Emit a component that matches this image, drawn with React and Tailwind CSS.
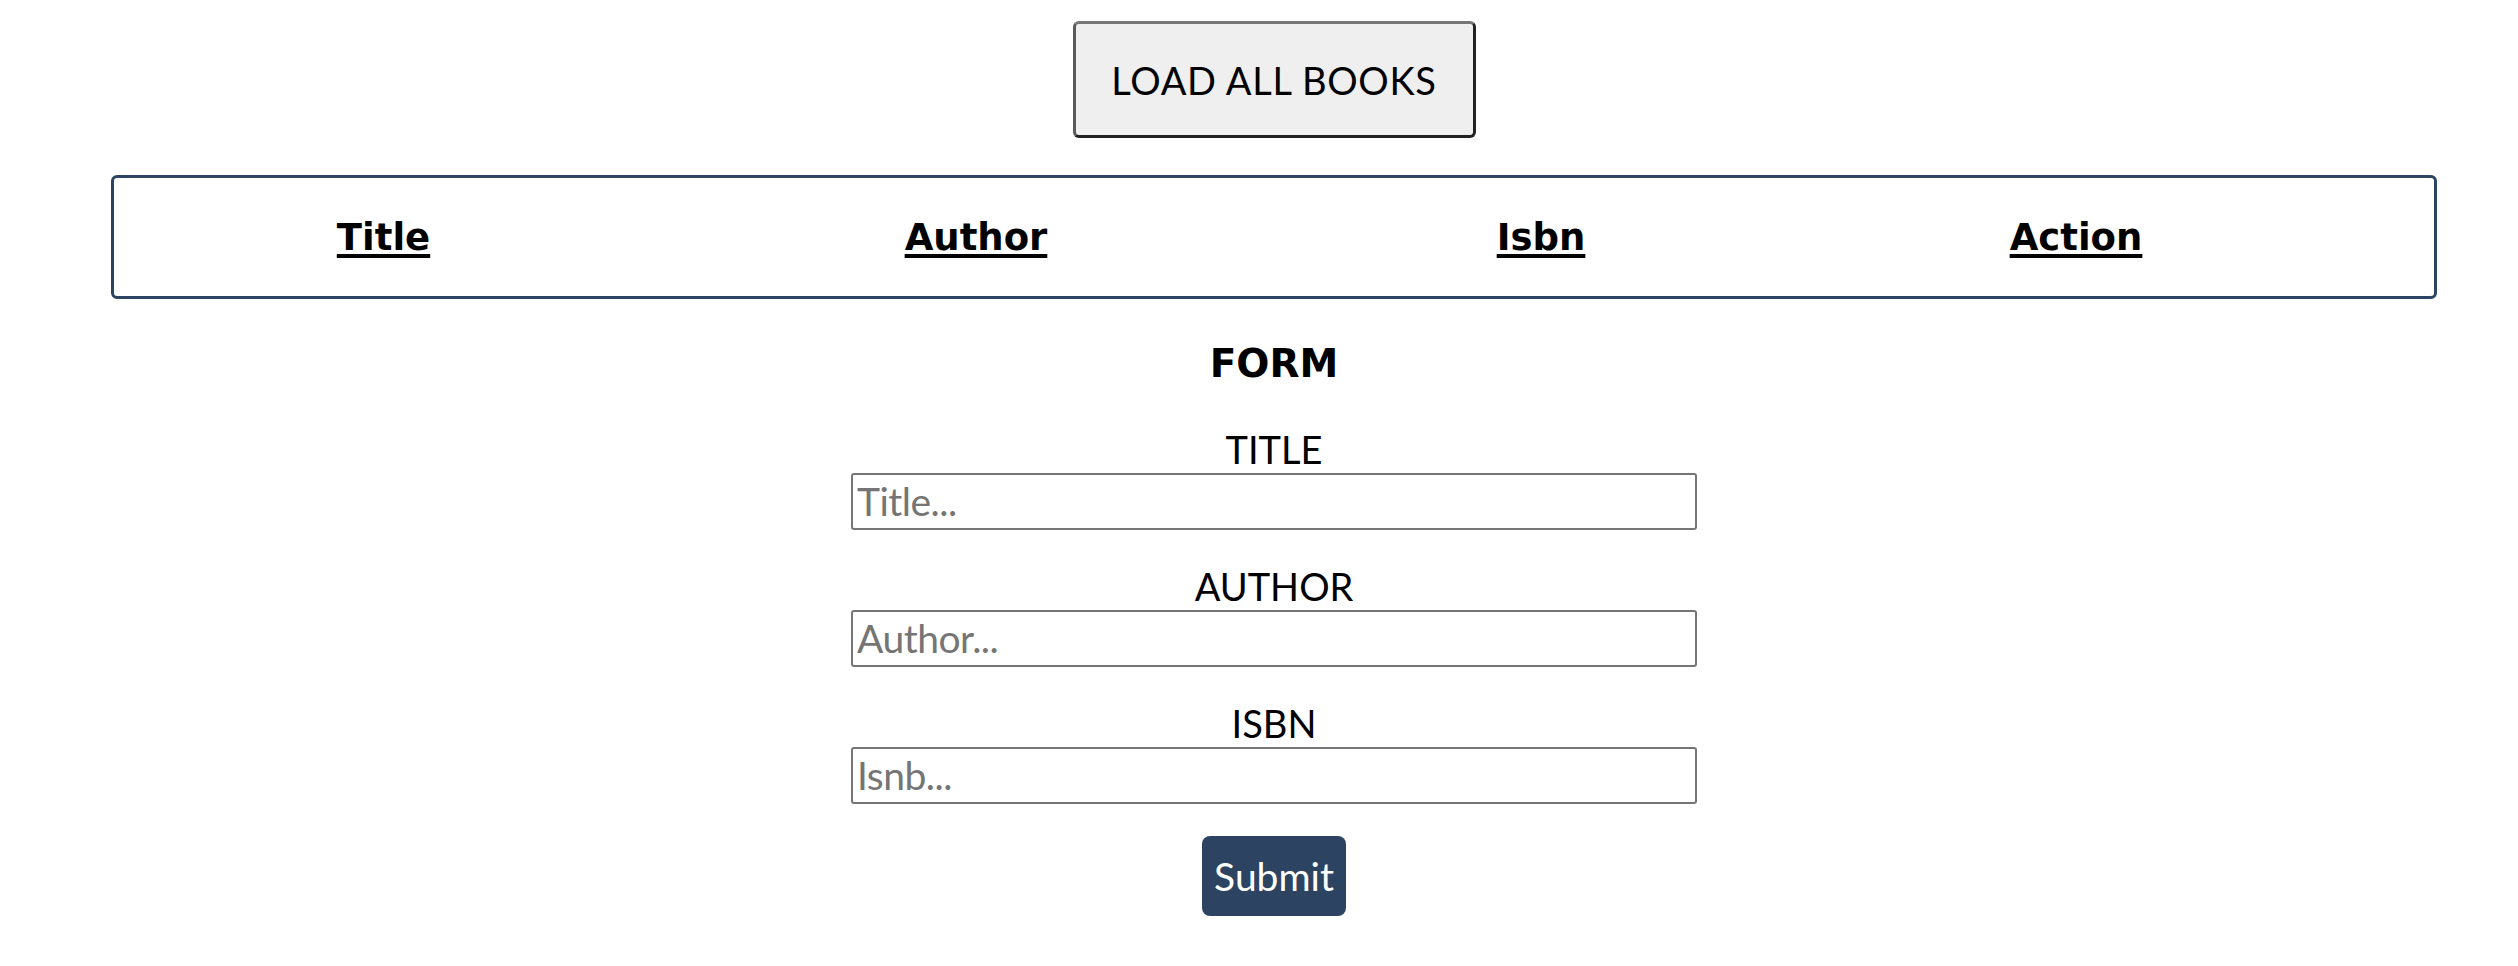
import React from "react";

export default function App() {
  const headers = ["Title", "Author", "Isbn", "Action"];
  const fields = [
    { label: "TITLE", ph: "Title..." },
    { label: "AUTHOR", ph: "Author..." },
    { label: "ISBN", ph: "Isnb..." },
  ];
  return (
    <div className="min-h-screen bg-white pl-[30px] pt-[21px] font-['Lato',sans-serif] text-black">
      <div className="flex justify-center">
        <button
          type="button"
          className="flex h-[117px] w-[403px] items-center justify-center rounded-[6px] border-[3px] border-t-[#767676] border-l-[#5a5a5a] border-b-[#222222] border-r-[#222222] bg-[#efefef] text-[38px] leading-none tracking-[0.7px] text-black"
        >
          LOAD ALL BOOKS
        </button>
      </div>

      <div className="mx-[81px] mt-[37px] grid h-[124px] grid-cols-[539px_646px_484px_586px] items-center rounded-[6px] border-[3px] border-[#2c4562]">
        {headers.map((h) => (
          <div key={h} className="text-center">
            <span className="font-['DejaVu_Sans',sans-serif] text-[37px] font-bold leading-none underline decoration-[4px] underline-offset-[4px]">
              {h}
            </span>
          </div>
        ))}
      </div>

      <form className="mt-[45px] flex flex-col items-center" onSubmit={(e) => e.preventDefault()}>
        <h2 className="font-['DejaVu_Sans',sans-serif] text-[39px] font-bold leading-none">FORM</h2>
        {fields.map((f, i) => (
          <div key={f.label} className={`flex flex-col items-center ${i === 0 ? "mt-[47px]" : "mt-[37px]"}`}>
            <label className="text-[38px] leading-none">{f.label}</label>
            <input
              type="text"
              placeholder={f.ph}
              className="mt-[5px] h-[57px] w-[846px] rounded-[3px] border-2 border-[#767676] bg-white px-[4px] text-[39px] tracking-[-0.5px] text-black outline-none placeholder:text-[#757575]"
            />
          </div>
        ))}
        <button
          type="submit"
          className="mt-[32px] flex h-[80px] w-[144px] items-center justify-center rounded-[8px] bg-[#2c4462] text-[39px] leading-none text-white"
        >
          Submit
        </button>
      </form>
    </div>
  );
}
